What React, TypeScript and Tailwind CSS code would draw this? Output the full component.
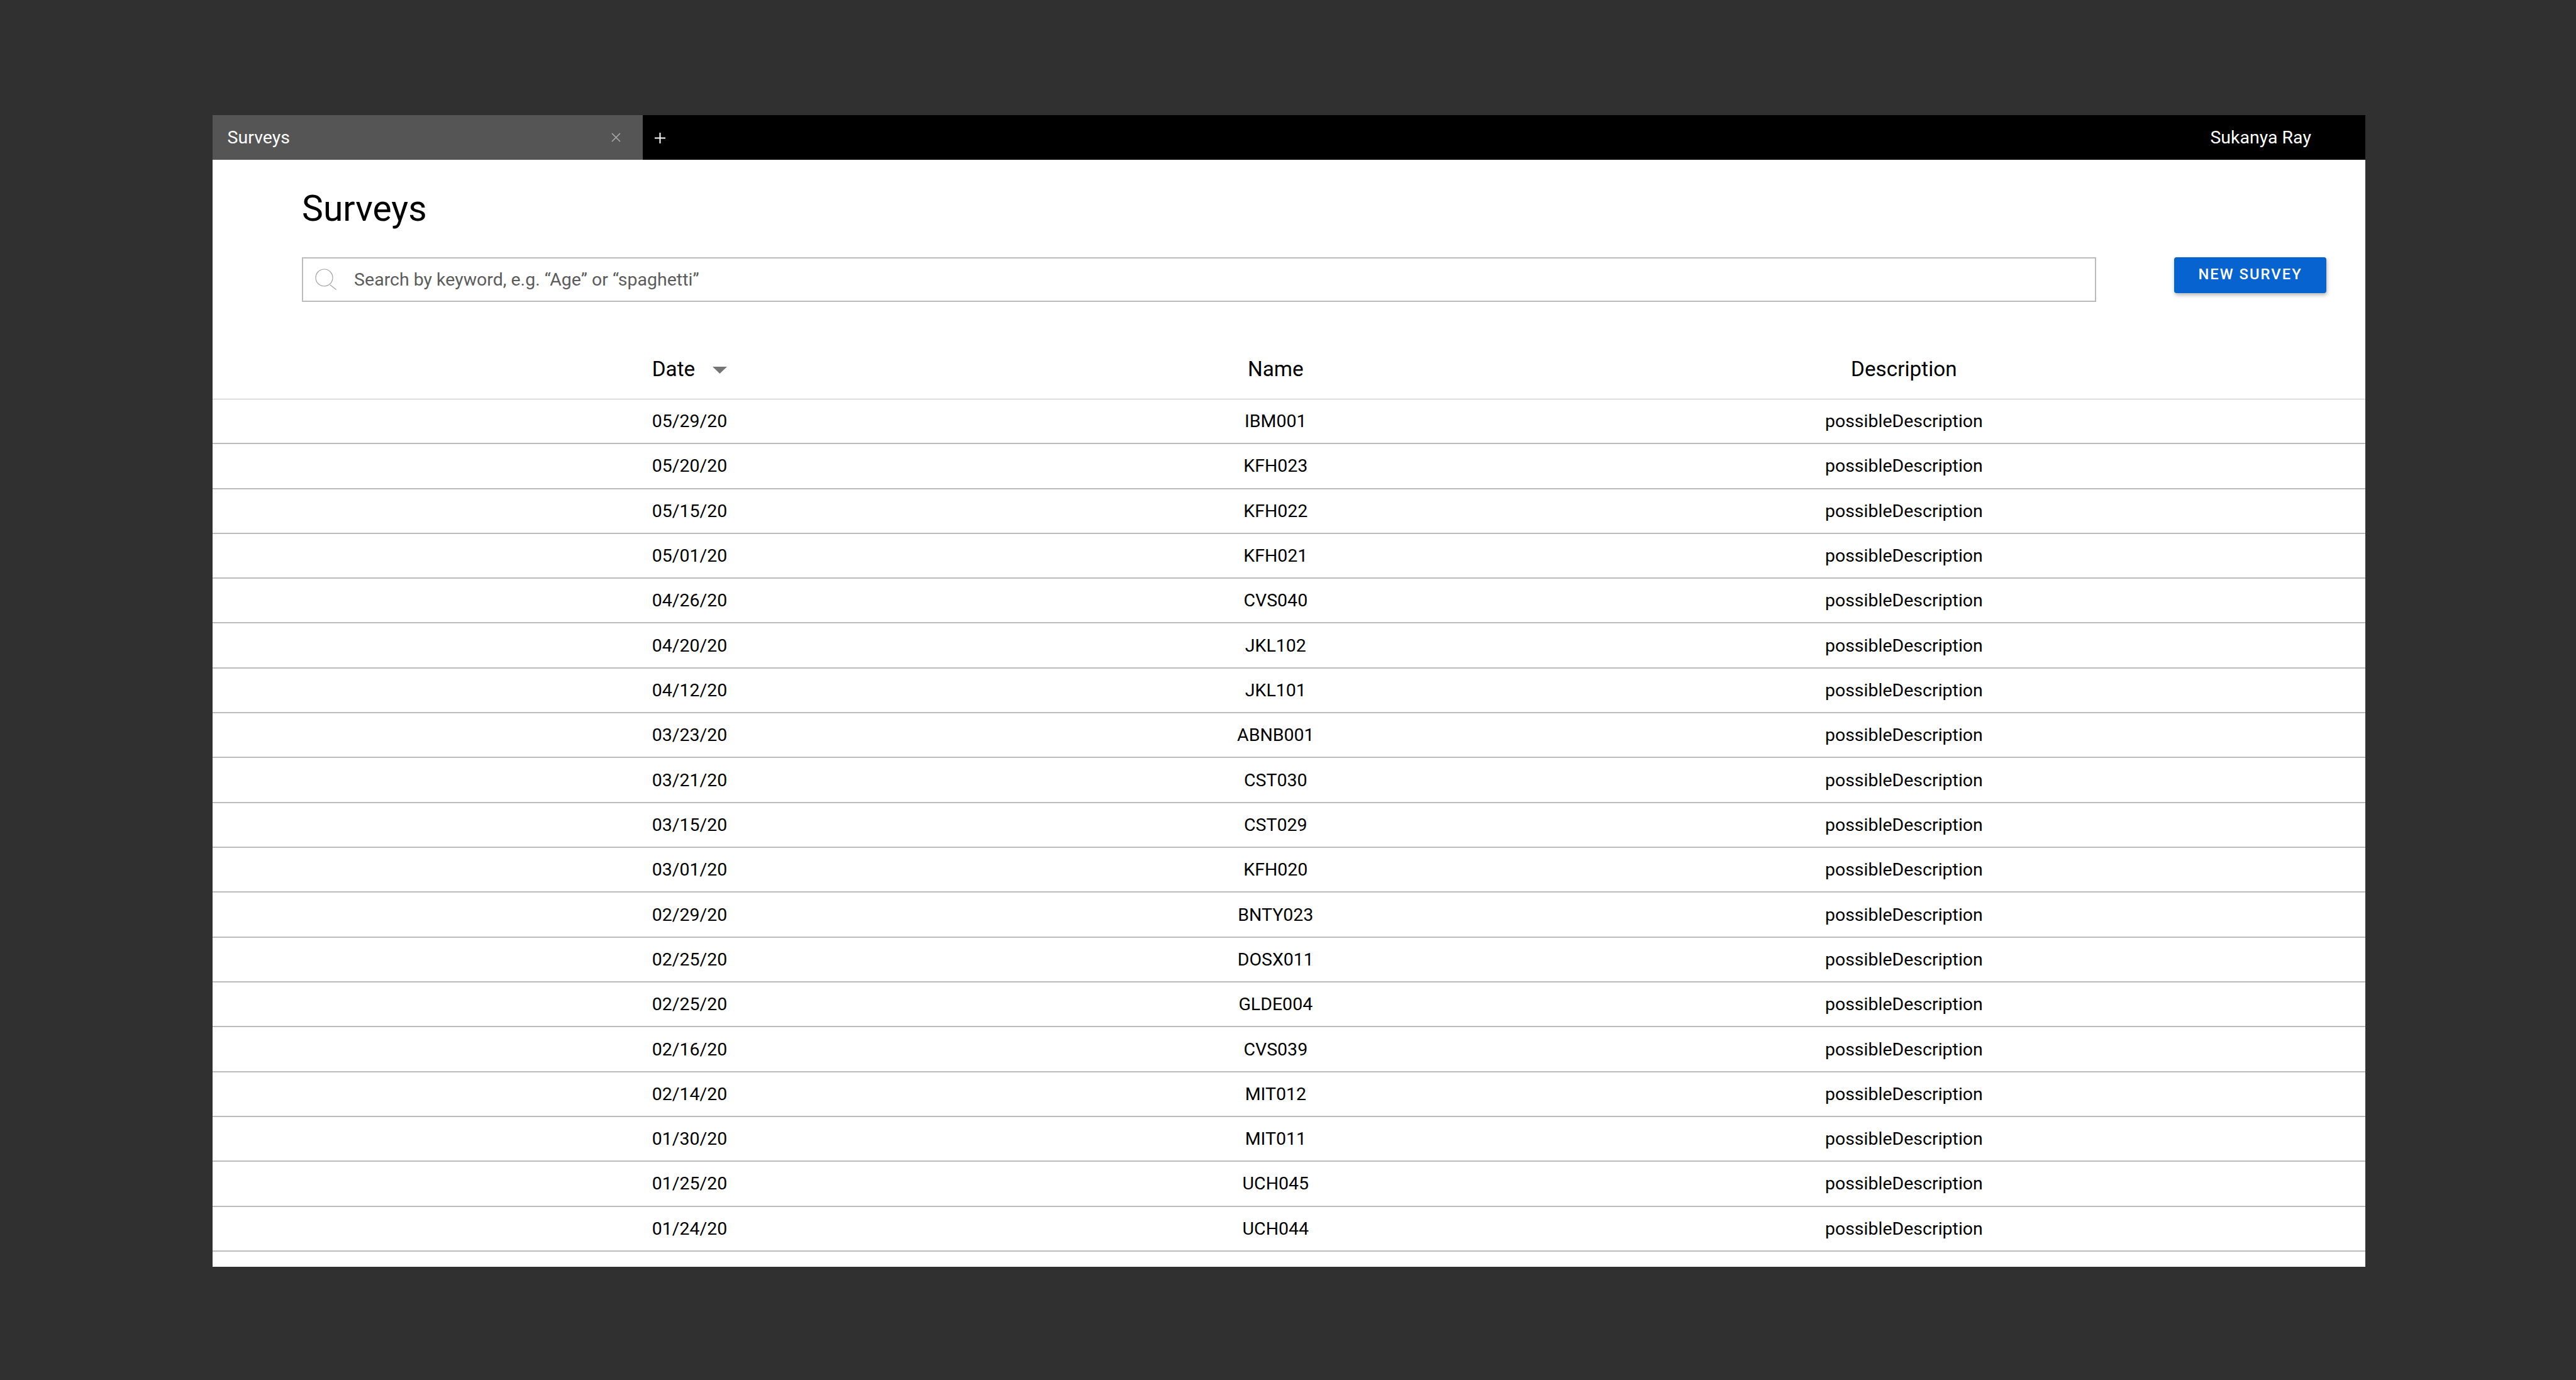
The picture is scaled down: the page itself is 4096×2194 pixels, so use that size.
import React from 'react';

const surveys = [
  ['05/29/20', 'IBM001'],
  ['05/20/20', 'KFH023'],
  ['05/15/20', 'KFH022'],
  ['05/01/20', 'KFH021'],
  ['04/26/20', 'CVS040'],
  ['04/20/20', 'JKL102'],
  ['04/12/20', 'JKL101'],
  ['03/23/20', 'ABNB001'],
  ['03/21/20', 'CST030'],
  ['03/15/20', 'CST029'],
  ['03/01/20', 'KFH020'],
  ['02/29/20', 'BNTY023'],
  ['02/25/20', 'DOSX011'],
  ['02/25/20', 'GLDE004'],
  ['02/16/20', 'CVS039'],
  ['02/14/20', 'MIT012'],
  ['01/30/20', 'MIT011'],
  ['01/25/20', 'UCH045'],
  ['01/24/20', 'UCH044'],
];

const columns = 'grid grid-cols-[1332.4px_531.3px_1466.8px] pl-[92.7px] items-center justify-items-center';

const App: React.FC = () => {
  return (
    <div className="h-[2194px] w-[4096px] overflow-hidden bg-[#303030] pl-[337.6px] pt-[183px] [font-family:Roboto,sans-serif]">
      <div className="h-[1830.5px] w-[3423.3px] overflow-hidden bg-white">
        {/* tab strip */}
        <div className="flex h-[71.3px] items-center bg-black pt-[1px] text-[28.5px] text-white">
          <div className="-mt-[1px] flex h-[71.3px] w-[684.6px] items-center justify-between bg-[#555555] pl-[24px] pr-[35px]">
            <span className="pt-[1px]">Surveys</span>
            <svg className="h-[15px] w-[15px]" viewBox="0 0 15 15" fill="none" stroke="#ababab" strokeWidth="1.6">
              <path d="M1 1 14 14M14 1 1 14" />
            </svg>
          </div>
          <svg className="ml-[19px] h-[17px] w-[17px]" viewBox="0 0 17 17" fill="none" stroke="#ffffff" strokeWidth="2">
            <path d="M8.5 0V17M0 8.5H17" />
          </svg>
          <span className="ml-auto pr-[86px]">Sukanya Ray</span>
        </div>

        <div className="pl-[142.5px] pr-[61.6px] pt-[44px]">
          <h1 className="text-[57px] leading-[68px] text-black">Surveys</h1>
          <div className="mt-[42.6px] flex items-start justify-between">
            <div className="flex h-[71px] w-[2852.7px] items-center border-[2.4px] border-[#bcbcbc] pl-[19px]">
              <svg className="h-[34px] w-[34px]" viewBox="0 0 34 34" fill="none" stroke="#a3a3a3" strokeWidth="1.2">
                <circle cx="14.5" cy="14.5" r="13.5" />
                <path d="M24 26 33.5 33.5" />
              </svg>
              <span className="ml-[28px] pt-[1px] text-[28.5px] text-[#5c5c5c]">Search by keyword, e.g. “Age” or “spaghetti”</span>
            </div>
            <button className="flex h-[57px] w-[242.5px] items-center justify-center rounded-[4px] bg-[#0663d0] pb-[1px] text-[23.8px] font-medium tracking-[2px] text-white shadow-[1px_3px_6px_rgba(0,0,0,0.3)]">
              NEW SURVEY
            </button>
          </div>
        </div>

        {/* table */}
        <div className={`${columns} mt-[60px] h-[95px] border-b border-[#c4c4c4] pt-[1px] text-[33.3px] text-black`}>
          <div className="flex items-center gap-[28px]">
            <span>Date</span>
            <svg className="mt-[2px] h-[11px] w-[23px]" viewBox="0 0 23 11" fill="#757575">
              <path d="M0 0H23L11.5 11Z" />
            </svg>
          </div>
          <span>Name</span>
          <span>Description</span>
        </div>
        {surveys.map(([date, name], i) => (
          <div key={i} className={`${columns} h-[71.32px] border-b-[2.4px] border-[#bcbcbc] pt-[2px] text-[28.5px] text-black`}>
            <span>{date}</span>
            <span>{name}</span>
            <span>possibleDescription</span>
          </div>
        ))}
      </div>
    </div>
  );
};

export default App;
